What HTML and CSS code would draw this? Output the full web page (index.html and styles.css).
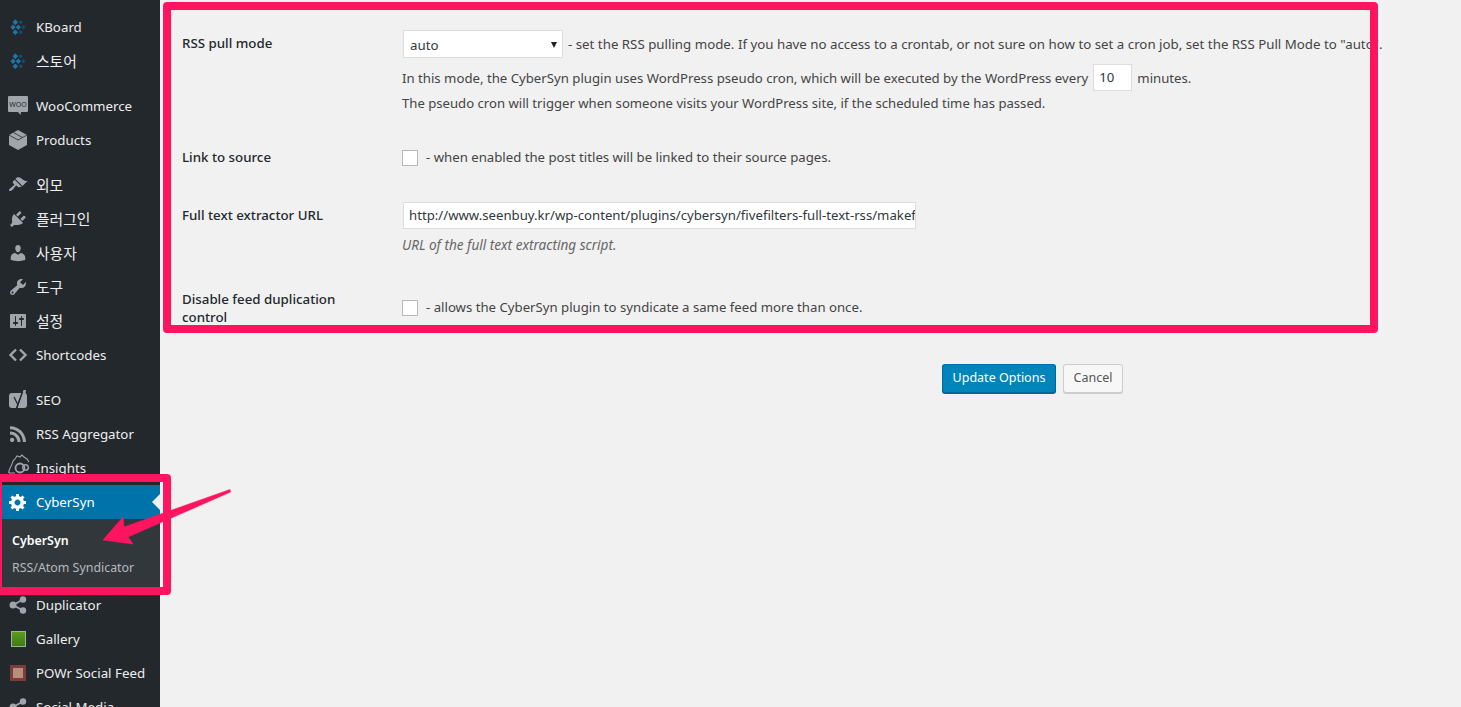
FILE: index.html
```html
<!DOCTYPE html>
<html lang="en">
<head>
  <meta charset="UTF-8">
  <title>CyberSyn Options</title>
  <link rel="stylesheet" href="styles.css">
</head>
<body>
  <div class="page">
    <nav class="sidebar">
      <ul class="menu">
        <li class="item"><svg class="icon" viewBox="0 0 20 20"><path fill="#1f75a6" d="M7.300 2.300l2.800 3-2.800 3-2.800-3zM5 7.500l2.600 2.800L5 13.100l-2.600-2.800zM10.300 7.500l2.600 2.800-2.600 2.800-2.600-2.800zM7.300 12.500l2.800 2.800-2.800 2.800-2.800-2.800z"/><path fill="#164a6b" d="M12.700 3l2.300 2.300-2.300 2.300-2.300-2.300zM15.300 8l2.300 2.300-2.300 2.300-2.300-2.300zM12.700 13l2.300 2.300-2.300 2.300-2.300-2.300z"/></svg><span>KBoard</span></li>
        <li class="item"><svg class="icon" viewBox="0 0 20 20"><path fill="#1f75a6" d="M7.300 2.300l2.800 3-2.800 3-2.800-3zM5 7.500l2.600 2.800L5 13.100l-2.600-2.800zM10.300 7.500l2.600 2.800-2.600 2.800-2.600-2.800zM7.300 12.500l2.800 2.800-2.800 2.800-2.800-2.800z"/><path fill="#164a6b" d="M12.700 3l2.300 2.300-2.300 2.300-2.300-2.300zM15.300 8l2.300 2.300-2.300 2.300-2.300-2.300zM12.700 13l2.300 2.300-2.300 2.300-2.300-2.300z"/></svg><span class="ko">스토어</span></li>
        <li class="sep"></li>
        <li class="item"><svg class="icon" viewBox="0 0 20 20"><path fill="#a0a5aa" d="M1 0h18q1 0 1 1v14q0 1-1 1h-6l-.5 3-2.500-3H1q-1 0-1-1V1q0-1 1-1z"/><text x="10" y="10.500" class="woo">WOO</text></svg><span>WooCommerce</span></li>
        <li class="item"><svg class="icon" viewBox="0 0 20 20"><path fill="#a0a5aa" d="M10 0l9 5v10l-9 5-9-5V5z"/><path fill="none" stroke="#23282d" stroke-width=".8" d="M1 5l9 5 9-5M5.500 2.500l9 5"/></svg><span>Products</span></li>
        <li class="sep"></li>
        <li class="item"><svg class="icon" viewBox="0 0 20 20"><path fill="#a0a5aa" d="M14.480 11.060L7.410 3.990l1.500-1.500c.5-.56 2.300-.47 3.510.32 1.210.8 1.430 1.280 2.910 2.100 1.180.64 2.450 1.260 4.450.85zm-.71.71L6.700 4.700 4.930 6.470c-.39.39-.39 1.020 0 1.410l1.060 1.060c.39.39.39 1.030 0 1.420-.6.6-1.430 1.110-2.210 1.690-.35.26-.7.53-1.010.84C1.430 13.230.5 15.040 1.230 15.770c.73.73 2.540-.2 3.880-1.540.31-.31.58-.66.84-1.010.58-.78 1.090-1.610 1.690-2.210.39-.39 1.030-.39 1.420 0l1.060 1.060c.39.39 1.020.39 1.410 0z"/></svg><span class="ko">외모</span></li>
        <li class="item"><svg class="icon" viewBox="0 0 20 20"><path fill="#a0a5aa" d="M13.110 4.360L9.870 7.600 8 5.730l3.240-3.240c.35-.34 1.050-.2 1.560.32.52.51.66 1.210.31 1.550zm-8 1.770l.91-1.120 9.010 9.010-1.190.84c-.71.71-2.630 1.160-3.820 1.160H6.140L4.900 17.260c-.59.59-1.540.59-2.120 0-.59-.58-.59-1.530 0-2.120l1.240-1.240v-3.880c0-1.130.4-3.190 1.090-3.890zm7.260 3.970l3.240-3.240c.34-.35 1.040-.21 1.550.31.52.51.66 1.210.31 1.550l-3.240 3.250z"/></svg><span class="ko">플러그인</span></li>
        <li class="item"><svg class="icon" viewBox="0 0 20 20"><path fill="#a0a5aa" d="M10 9.250c-2.270 0-2.730-3.440-2.730-3.440C7 4.020 7.820 2 9.970 2c2.160 0 2.980 2.020 2.710 3.810 0 0-.41 3.440-2.680 3.440zm0 2.570L12.720 10c2.390 0 4.520 2.330 4.520 4.530v2.490s-3.650 1.130-7.240 1.130c-3.650 0-7.240-1.130-7.240-1.130v-2.490c0-2.250 1.940-4.480 4.470-4.480z"/></svg><span class="ko">사용자</span></li>
        <li class="item"><svg class="icon" viewBox="0 0 20 20"><path fill="#a0a5aa" d="M16.680 9.770c-1.340 1.340-3.300 1.670-4.950.99l-5.410 6.520c-.99.99-2.590.99-3.580 0s-.99-2.590 0-3.570l6.520-5.420c-.68-1.650-.35-3.610.99-4.950 1.280-1.280 3.120-1.620 4.720-1.060l-2.890 2.890 2.820 2.820 2.860-2.870c.53 1.580.18 3.390-1.080 4.650zM3.810 16.210c.4.39 1.040.39 1.430 0 .4-.4.4-1.040 0-1.430-.39-.4-1.030-.4-1.430 0-.39.39-.39 1.030 0 1.430z"/></svg><span class="ko">도구</span></li>
        <li class="item"><svg class="icon" viewBox="0 0 20 20"><path fill="#a0a5aa" d="M18 16V4c0-.55-.45-1-1-1H3c-.55 0-1 .45-1 1v12c0 .55.45 1 1 1h14c.55 0 1-.45 1-1zM8 11h1c.55 0 1 .45 1 1s-.45 1-1 1H8v1.500c0 .28-.22.5-.5.5s-.5-.22-.5-.5V13H6c-.55 0-1-.45-1-1s.45-1 1-1h1V5.500c0-.28.22-.5.5-.5s.5.22.5.5V11zm5-2h-1c-.55 0-1-.45-1-1s.45-1 1-1h1V5.500c0-.28.22-.5.5-.5s.5.22.5.5V7h1c.55 0 1 .45 1 1s-.45 1-1 1h-1v5.500c0 .28-.22.5-.5.5s-.5-.22-.5-.5V9z"/></svg><span class="ko">설정</span></li>
        <li class="item"><svg class="icon" viewBox="0 0 20 20"><path fill="none" stroke="#a0a5aa" stroke-width="2.400" d="M8 4.500L2.500 10 8 15.500M12 4.500l5.500 5.500-5.500 5.500"/></svg><span>Shortcodes</span></li>
        <li class="sep"></li>
        <li class="item"><svg class="icon" viewBox="0 0 20 20"><path fill="#a0a5aa" d="M4 3h9.500L8 18H4q-3 0-3-3V6q0-3 3-3zM15.500 0H18l-.5 3q1.500 1 1.500 3v9q0 3-3 3H9.500z"/><path fill="none" stroke="#23282d" stroke-width="1.300" d="M6 7l3.500 7M14.500 2L8.500 18.500 6 19.500"/></svg><span>SEO</span></li>
        <li class="item"><svg class="icon" viewBox="0 0 20 20"><path fill="#a0a5aa" d="M14.920 18H18C18 9.320 10.820 2.250 2 2.250v3.020c7.120 0 12.920 5.710 12.920 12.730zm-5.440 0h3.080C12.560 12.270 7.820 7.600 2 7.600v3.020c2 0 3.870.77 5.290 2.160C8.700 14.170 9.480 16.030 9.480 18zm-5.350-.02c1.170 0 2.130-.93 2.130-2.090 0-1.150-.96-2.090-2.130-2.090-1.180 0-2.130.94-2.130 2.090 0 1.160.95 2.090 2.130 2.090z"/></svg><span>RSS Aggregator</span></li>
        <li class="item"><svg class="icon icon-over" viewBox="0 0 20 20"><g fill="none" stroke="#a0a5aa"><path stroke-width="1.100" d="M.5 15C1 10 4 8 5 3l2-2 2-3 3 1 2-2 2 2 3 2 2 3M1 15h6"/><circle cx="12" cy="10" r="4.500" stroke-width="1.800"/><circle cx="17.500" cy="9.500" r="2.800" stroke-width="1.400"/></g></svg><span>Insights</span></li>
        <li class="item current"><svg class="icon" viewBox="0 0 20 20"><path fill="#fff" d="M18 12h-2.180c-.17.7-.44 1.350-.81 1.930l1.540 1.540-2.100 2.100-1.540-1.540c-.58.36-1.230.63-1.910.79V19H8v-2.180c-.68-.16-1.330-.43-1.910-.79l-1.540 1.540-2.120-2.120 1.540-1.540c-.36-.58-.63-1.230-.79-1.910H1V9.030h2.170c.16-.7.44-1.350.8-1.940L2.430 5.550l2.100-2.100 1.540 1.540c.58-.37 1.240-.64 1.930-.81V2h3v2.180c.68.16 1.330.43 1.910.79l1.540-1.540 2.120 2.120-1.540 1.540c.36.59.64 1.240.8 1.940H18V12zm-8.500 1.500c1.660 0 3-1.340 3-3s-1.340-3-3-3-3 1.340-3 3 1.340 3 3 3z"/></svg><span>CyberSyn</span></li>
        <li class="submenu">
          <div class="subitem active">CyberSyn</div>
          <div class="subitem">RSS/Atom Syndicator</div>
        </li>
        <li class="item"><svg class="icon" viewBox="0 0 20 20"><g fill="#a0a5aa"><circle cx="5" cy="10" r="3.500"/><circle cx="15" cy="4.500" r="3.200"/><circle cx="15" cy="15.500" r="3.200"/></g><path stroke="#a0a5aa" stroke-width="1.800" d="M5 10l10-5.500M5 10l10 5.500"/></svg><span>Duplicator</span></li>
        <li class="item"><span class="swatch swatch-green"></span><span>Gallery</span></li>
        <li class="item"><span class="swatch swatch-powr"></span><span>POWr Social Feed</span></li>
        <li class="item"><svg class="icon" viewBox="0 0 20 20"><g fill="#a0a5aa"><circle cx="5" cy="10" r="3.500"/><circle cx="15" cy="4.500" r="3.200"/><circle cx="15" cy="15.500" r="3.200"/></g><path stroke="#a0a5aa" stroke-width="1.800" d="M5 10l10-5.500M5 10l10 5.500"/></svg><span>Social Media</span></li>
      </ul>
    </nav>

    <main class="content">
      <div class="row row-pull">
        <div class="label">RSS pull mode</div>
        <div class="field">
          <div class="line line-select">
            <div class="select">auto<span class="caret"></span></div>
            <span>- set the RSS pulling mode. If you have no access to a crontab, or not sure on how to set a cron job, set the RSS Pull Mode to "auto".</span>
          </div>
          <div class="line line-every">
            <span>In this mode, the CyberSyn plugin uses WordPress pseudo cron, which will be executed by the WordPress every</span>
            <div class="input input-small">10</div>
            <span>minutes.</span>
          </div>
          <div class="line line-note">The pseudo cron will trigger when someone visits your WordPress site, if the scheduled time has passed.</div>
        </div>
      </div>

      <div class="row row-link">
        <div class="label">Link to source</div>
        <div class="field line">
          <span class="check"></span>
          <span>- when enabled the post titles will be linked to their source pages.</span>
        </div>
      </div>

      <div class="row row-url">
        <div class="label">Full text extractor URL</div>
        <div class="field">
          <div class="input input-url">http://www.seenbuy.kr/wp-content/plugins/cybersyn/fivefilters-full-text-rss/makefulltextfeed.php</div>
          <div class="hint">URL of the full text extracting script.</div>
        </div>
      </div>

      <div class="row row-dup">
        <div class="label">Disable feed duplication control</div>
        <div class="field line">
          <span class="check"></span>
          <span class="dup-text">- allows the CyberSyn plugin to syndicate a same feed more than once.</span>
        </div>
      </div>

      <div class="actions">
        <button class="btn btn-primary">Update Options</button>
        <button class="btn btn-cancel">Cancel</button>
      </div>
    </main>

    <!-- annotations drawn over the screenshot -->
    <div class="mark mark-main"></div>
    <div class="mark mark-side"></div>
    <svg class="arrow" viewBox="0 0 140 70"><path fill="#ff1460" stroke="#ff1460" stroke-width=".6" d="M128 .5l.5 2.500L26 48l5 7-30-4 20-23 1 10z"/></svg>
  </div>
</body>
</html>
```

FILE: styles.css
```css
html, body {
  margin: 0;
  padding: 0;
  height: 100%;
  overflow: hidden;
}

body {
  background: #f1f1f1;
  color: #444;
  font-family: "Noto Sans", "Noto Sans CJK KR", sans-serif;
  font-size: 13.200px;
}

.page {
  position: relative;
  display: flex;
  height: 707px;
  overflow: hidden;
}

/* sidebar */
.sidebar {
  width: 160px;
  flex: none;
  background: #23282d;
  padding-top: 10px;
  font-size: 13.300px;
}

.menu {
  list-style: none;
  margin: 0;
  padding: 0;
}

.item {
  display: flex;
  align-items: center;
  gap: 8px;
  height: 34px;
  padding-left: 8px;
  color: #eee;
  white-space: nowrap;
}

.ko {
  font-size: 14.800px;
  line-height: 18px;
}

.sep {
  height: 11px;
}

.icon {
  width: 20px;
  height: 20px;
  flex: none;
}

.icon-over {
  overflow: visible;
}

.woo {
  fill: #23282d;
  font-size: 7px;
  text-anchor: middle;
}

.swatch {
  box-sizing: border-box;
  flex: none;
}

.swatch-green {
  width: 15px;
  height: 16px;
  margin: 0 2px 0 3px;
  background: linear-gradient(#5d9c1c, #3f7a14);
  border: 1px solid #9db5a0;
}

.swatch-powr {
  width: 16px;
  height: 16px;
  margin: 0 2px;
  background: #b98d7b;
  box-shadow: inset 0 0 0 3px #7c3d3a;
}

.current {
  position: relative;
  background: #0073aa;
  color: #fff;
}

.current::after {
  content: "";
  position: absolute;
  right: 0;
  top: 9px;
  border: 8px solid transparent;
  border-right-color: #f1f1f1;
  border-left-width: 0;
}

.submenu {
  height: 69px;
  box-sizing: border-box;
  padding: 8px 0 7px 12px;
  background: #32373c;
  color: #b4b9be;
  font-size: 12.400px;
}

.subitem {
  height: 27px;
  line-height: 27px;
  white-space: nowrap;
}

.subitem.active {
  color: #fff;
  font-weight: 600;
}

/* options form */
.content {
  flex: 1;
  min-width: 0;
  padding: 30px 0 0 22px;
}

.row {
  display: flex;
}

.label {
  width: 190px;
  margin-right: 30px;
  flex: none;
  color: #23282d;
  font-size: 13.300px;
  font-weight: 500;
  line-height: 18px;
}

.field {
  white-space: nowrap;
}

.line {
  display: flex;
  align-items: center;
  gap: 5px;
}

.line-select {
  height: 28px;
  font-size: 13.300px;
}

.line-every {
  height: 27px;
  margin-top: 6px;
  font-size: 13.190px;
}

.line-note {
  height: 24px;
  font-size: 13.130px;
}

.select {
  box-sizing: border-box;
  position: relative;
  width: 160px;
  height: 28px;
  margin-left: 1px;
  padding-left: 6px;
  line-height: 28px;
  background: #fff;
  border: 1px solid #ddd;
  color: #32373c;
}

.caret {
  position: absolute;
  right: 5px;
  top: 11px;
  border: 3.500px solid transparent;
  border-top: 6px solid #222;
  border-bottom: 0;
}

.input {
  box-sizing: border-box;
  height: 27px;
  line-height: 25px;
  background: #fff;
  border: 1px solid #ddd;
  color: #32373c;
  padding: 0 5px;
  overflow: hidden;
}

.input-small {
  width: 39px;
}

.input-url {
  width: 513px;
  margin-left: 1px;
}

.check {
  box-sizing: border-box;
  width: 16px;
  height: 16px;
  margin-right: 3px;
  flex: none;
  background: #fff;
  border: 1px solid #b4b9be;
}

.hint {
  margin-top: 4px;
  line-height: 24px;
  font-size: 13.570px;
  font-style: italic;
  color: #666;
}

.row-pull .label {
  margin-top: 4px;
}

.row-link {
  margin-top: 30px;
}

.row-link .label,
.row-link .line {
  height: 24px;
  line-height: 24px;
}

.row-link .check {
  margin-top: 2px;
}

.row-url {
  margin-top: 33px;
}

.row-url .label {
  margin-top: 4px;
}

.row-dup {
  margin-top: 33px;
}

.row-dup .line {
  height: 36px;
}

.dup-text {
  margin-bottom: 2px;
}

.actions {
  display: flex;
  gap: 7px;
  margin: 38px 0 0 760px;
}

.btn {
  box-sizing: border-box;
  height: 29px;
  padding: 0 0 2px;
  font: inherit;
  font-size: 12.500px;
  white-space: nowrap;
  color: #555;
  background: #f7f7f7;
  border: 1px solid #ccc;
  border-radius: 3px;
  box-shadow: 0 1px 0 #ccc;
}

.btn-cancel {
  width: 60px;
}

.btn-primary {
  width: 114px;
  color: #fff;
  background: #0085ba;
  border-color: #0073aa #006799 #006799;
  box-shadow: 0 1px 0 #006799;
}

/* annotations */
.mark {
  position: absolute;
  box-sizing: border-box;
  border: 8px solid #ff1460;
  border-radius: 4px;
}

.mark-main {
  left: 163px;
  top: 2px;
  width: 1215px;
  height: 331px;
}

.mark-side {
  left: -6px;
  top: 474px;
  width: 177px;
  height: 121px;
}

.arrow {
  position: absolute;
  left: 102px;
  top: 489px;
  width: 140px;
  height: 70px;
}
```
